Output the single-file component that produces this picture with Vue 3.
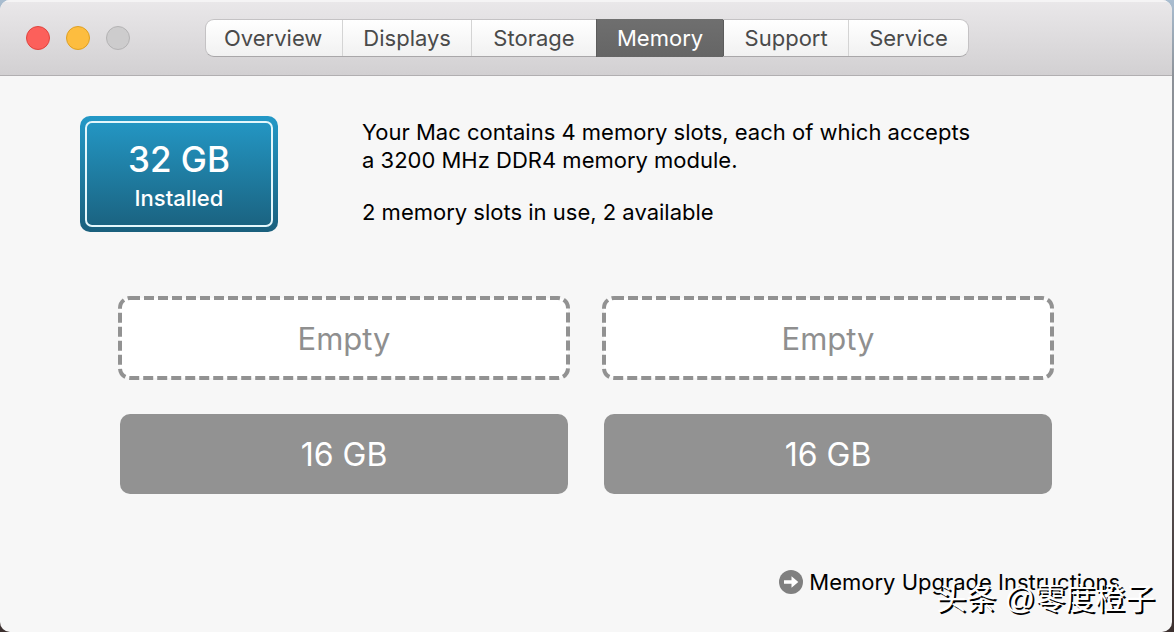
<template>
  <div class="desktop">
    <main class="window">
      <header class="titlebar">
        <div class="lights">
          <button
            v-for="light in lights"
            :key="light.name"
            class="light"
            :class="light.name"
            :aria-label="light.label"
            :disabled="light.name === 'zoom'"
          ></button>
        </div>
        <nav class="tabs">
          <button
            v-for="tab in tabs"
            :key="tab"
            class="tab"
            :class="{ active: tab === activeTab }"
            @click="activeTab = tab"
          >
            {{ tab }}
          </button>
        </nav>
      </header>

      <section class="summary">
        <div class="badge">
          <div class="badge-inner">
            <span class="badge-size">32 GB</span>
            <span class="badge-label">Installed</span>
          </div>
        </div>
        <div class="info">
          <p>Your Mac contains 4 memory slots, each of which accepts<br>a 3200 MHz DDR4 memory module.</p>
          <p>2 memory slots in use, 2 available</p>
        </div>
      </section>

      <section class="slots">
        <div
          v-for="slot in slots"
          :key="slot.id"
          class="slot"
          :class="slot.size ? 'filled' : 'empty'"
        >
          <svg v-if="!slot.size" class="outline" aria-hidden="true">
            <rect class="outline-rect" x="2" y="2" rx="10" />
          </svg>
          <span class="slot-text">{{ slot.size || 'Empty' }}</span>
        </div>
      </section>

      <footer class="footer">
        <a href="#" class="help-link">
          <svg class="arrow" viewBox="0 0 24 24" aria-hidden="true">
            <circle cx="12" cy="12" r="12" fill="#808080" />
            <path d="M5 10.3h7.5V6.2l6.8 5.8-6.8 5.8v-4.1H5z" fill="#fff" />
          </svg>
          <span>Memory Upgrade Instructions</span>
        </a>
      </footer>
    </main>
    <div class="watermark">头条 @零度橙子</div>
  </div>
</template>

<script setup>
import { ref } from 'vue'

const lights = [
  { name: 'close', label: 'Close' },
  { name: 'minimize', label: 'Minimize' },
  { name: 'zoom', label: 'Zoom' }
]

const tabs = ['Overview', 'Displays', 'Storage', 'Memory', 'Support', 'Service']
const activeTab = ref('Memory')

const slots = [
  { id: 1, size: '' },
  { id: 2, size: '' },
  { id: 3, size: '16 GB' },
  { id: 4, size: '16 GB' }
]
</script>

<style>
body {
  margin: 0;
}
</style>

<style scoped>
.desktop {
  position: relative;
  display: flex;
  box-sizing: border-box;
  min-height: 100vh;
  padding-right: 2px;
  background: linear-gradient(#a9bdd0, #8d9299 12%, #77777b 50%, #3c302f);
  font-family: Inter, "Liberation Sans", "Noto Sans CJK SC", sans-serif;
  font-size: 22px;
  color: #000;
}

.window {
  flex: 1;
  display: flex;
  flex-direction: column;
  border-radius: 10px;
  background: #f7f7f7;
  overflow: hidden;
}

.titlebar {
  display: flex;
  align-items: center;
  box-sizing: border-box;
  height: 76px;
  padding: 0 26px;
  border-bottom: 1px solid #b1afb1;
  background: linear-gradient(#eae8ea, #d2d0d2);
  box-shadow: inset 0 2px 0 #f5f4f5;
}

.lights {
  display: flex;
  gap: 16px;
}

.light {
  width: 24px;
  height: 24px;
  padding: 0;
  border: 1px solid;
  border-radius: 50%;

  &.close {
    background: #fc605b;
    border-color: #e0443e;
  }

  &.minimize {
    background: #fdbd3f;
    border-color: #dfa023;
  }

  &.zoom {
    background: #cdcccd;
    border-color: #b4b3b4;
  }
}

.tabs {
  display: flex;
  margin-left: 75px;
  border: 1px solid #c4c2c4;
  border-bottom-color: #a9a7a9;
  border-radius: 9px;
  background: linear-gradient(#fff, #f1f1f1);
}

.tab {
  min-width: 125px;
  height: 36px;
  padding: 0 20px;
  border: 0;
  border-left: 1px solid #d4d4d4;
  background: none;
  font: inherit;
  line-height: 36px;
  color: #4a4a4a;

  &:first-child {
    padding-left: 18px;
    border-left: 0;
  }

  &:last-child {
    min-width: 0;
  }

  &.active {
    height: 38px;
    margin: -1px 0;
    border-left-color: #5c5c5c;
    background: linear-gradient(#6f6f6f, #656565);
    color: #fff;
  }
}

.tab.active + .tab {
  border-left-color: #5c5c5c;
}

.summary {
  display: flex;
  gap: 84px;
  padding: 40px 80px 0;
}

.badge {
  flex: none;
  box-sizing: border-box;
  width: 198px;
  height: 116px;
  padding: 5px;
  border-radius: 10px;
  background: linear-gradient(#2499c7, #1a607d);
}

.badge-inner {
  display: flex;
  flex-direction: column;
  align-items: center;
  box-sizing: border-box;
  height: 100%;
  padding-top: 14px;
  border: 2px solid #e4f7fc;
  border-radius: 7px;
  font-weight: 500;
  color: #fff;
}

.badge-size {
  font-size: 35px;
  line-height: 44px;
}

.badge-label {
  line-height: 34px;
}

.info {
  padding-top: 2px;
  line-height: 28px;

  p {
    margin: 0;
  }

  p + p {
    margin-top: 24px;
  }
}

.slots {
  display: grid;
  grid-template-columns: 1fr 1fr;
  gap: 32px;
  padding: 64px 118px 0;
}

.slot {
  display: flex;
  align-items: center;
  justify-content: center;
  font-size: 32px;
}

.empty {
  position: relative;
  height: 84px;
  font-size: 31px;
  color: #8f8f8f;
}

.outline {
  position: absolute;
  inset: 0;
  width: 100%;
  height: 100%;
}

.outline-rect {
  width: calc(100% - 4px);
  height: calc(100% - 4px);
  fill: #fff;
  stroke: #929292;
  stroke-width: 4px;
  stroke-dasharray: 10 4;
}

.slot-text {
  position: relative;
}

.filled {
  height: 80px;
  margin: 2px;
  border-radius: 10px;
  background: #929292;
  color: #fff;
}

.footer {
  display: flex;
  justify-content: flex-end;
  margin-top: auto;
  padding: 0 52px 36px;
}

.help-link {
  display: flex;
  align-items: center;
  gap: 6px;
  line-height: 28px;
  color: #000;
  text-decoration: none;
}

.arrow {
  width: 24px;
  height: 24px;
}

.watermark {
  position: absolute;
  right: 19px;
  bottom: 11px;
  font-family: "Liberation Sans", "Noto Sans CJK SC", sans-serif;
  font-size: 30px;
  line-height: 44px;
  color: #fff;
  text-shadow: 2px 2px 0 #000;
}
</style>
